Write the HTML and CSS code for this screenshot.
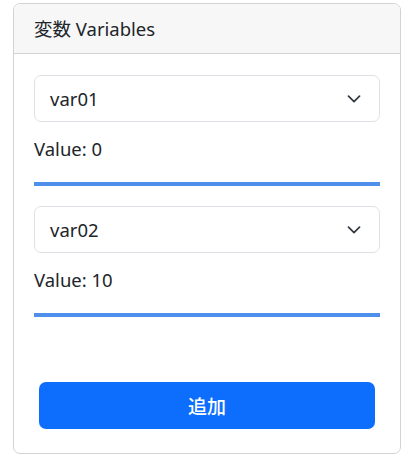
FILE: index.html
```html
<!DOCTYPE html>
<html lang="ja">
<head>
<meta charset="utf-8">
<link rel="stylesheet" href="styles.css">
</head>
<body>
<div class="card">
  <div class="card-header">変数 Variables</div>
  <div class="card-body">
    <div class="var-block">
      <div class="select">
        <span>var01</span>
        <svg class="chev" viewBox="0 0 14 8" width="14" height="8"><path d="M1.5 1.2l5.5 5.5 5.5-5.5" fill="none" stroke="#343a40" stroke-width="1.7" stroke-linecap="round" stroke-linejoin="round"/></svg>
      </div>
      <div class="value">Value: 0</div>
      <div class="bar"></div>
    </div>
    <div class="var-block">
      <div class="select">
        <span>var02</span>
        <svg class="chev" viewBox="0 0 14 8" width="14" height="8"><path d="M1.5 1.2l5.5 5.5 5.5-5.5" fill="none" stroke="#343a40" stroke-width="1.7" stroke-linecap="round" stroke-linejoin="round"/></svg>
      </div>
      <div class="value">Value: 10</div>
      <div class="bar"></div>
    </div>
    <div class="actions">
      <button class="btn">追加</button>
    </div>
  </div>
</div>
</body>
</html>
```
FILE: styles.css
```css
* { box-sizing: border-box; }
body {
  margin: 0;
  background: #fff;
  font-family: "Noto Sans", "Noto Sans CJK JP", sans-serif;
  color: #212529;
  font-size: 18.5px;
  line-height: 27px;
}
.card {
  margin: 3px 7px 0 13px;
  width: 388px;
  border: 1px solid #d3d3d3;
  border-radius: 7px;
  overflow: hidden;
}
.card-header {
  background: #f7f7f7;
  border-bottom: 1px solid #d3d3d3;
  padding: 11px 20px;
  font-size: 18.5px;
}
.card-body {
  padding: 21px 20px 24px 20px;
}
.var-block { margin-bottom: 20px; }
.select {
  height: 47px;
  border: 1px solid #dee2e6;
  border-radius: 7px;
  display: flex;
  align-items: center;
  justify-content: space-between;
  padding: 0 18px 0 15px;
}
.chev { width: 14px; height: 8px; }
.value { margin-top: 13px; }
.bar {
  margin-top: 20px;
  height: 4px;
  background: #4f8fec;
}
.actions {
  padding: 45px 5px 0 5px;
}
.btn {
  display: block;
  width: 100%;
  height: 47px;
  border: none;
  border-radius: 7px;
  background: #0d6efd;
  color: #fff;
  font-family: inherit;
  font-size: 19px;
  font-weight: 500;
}
```
